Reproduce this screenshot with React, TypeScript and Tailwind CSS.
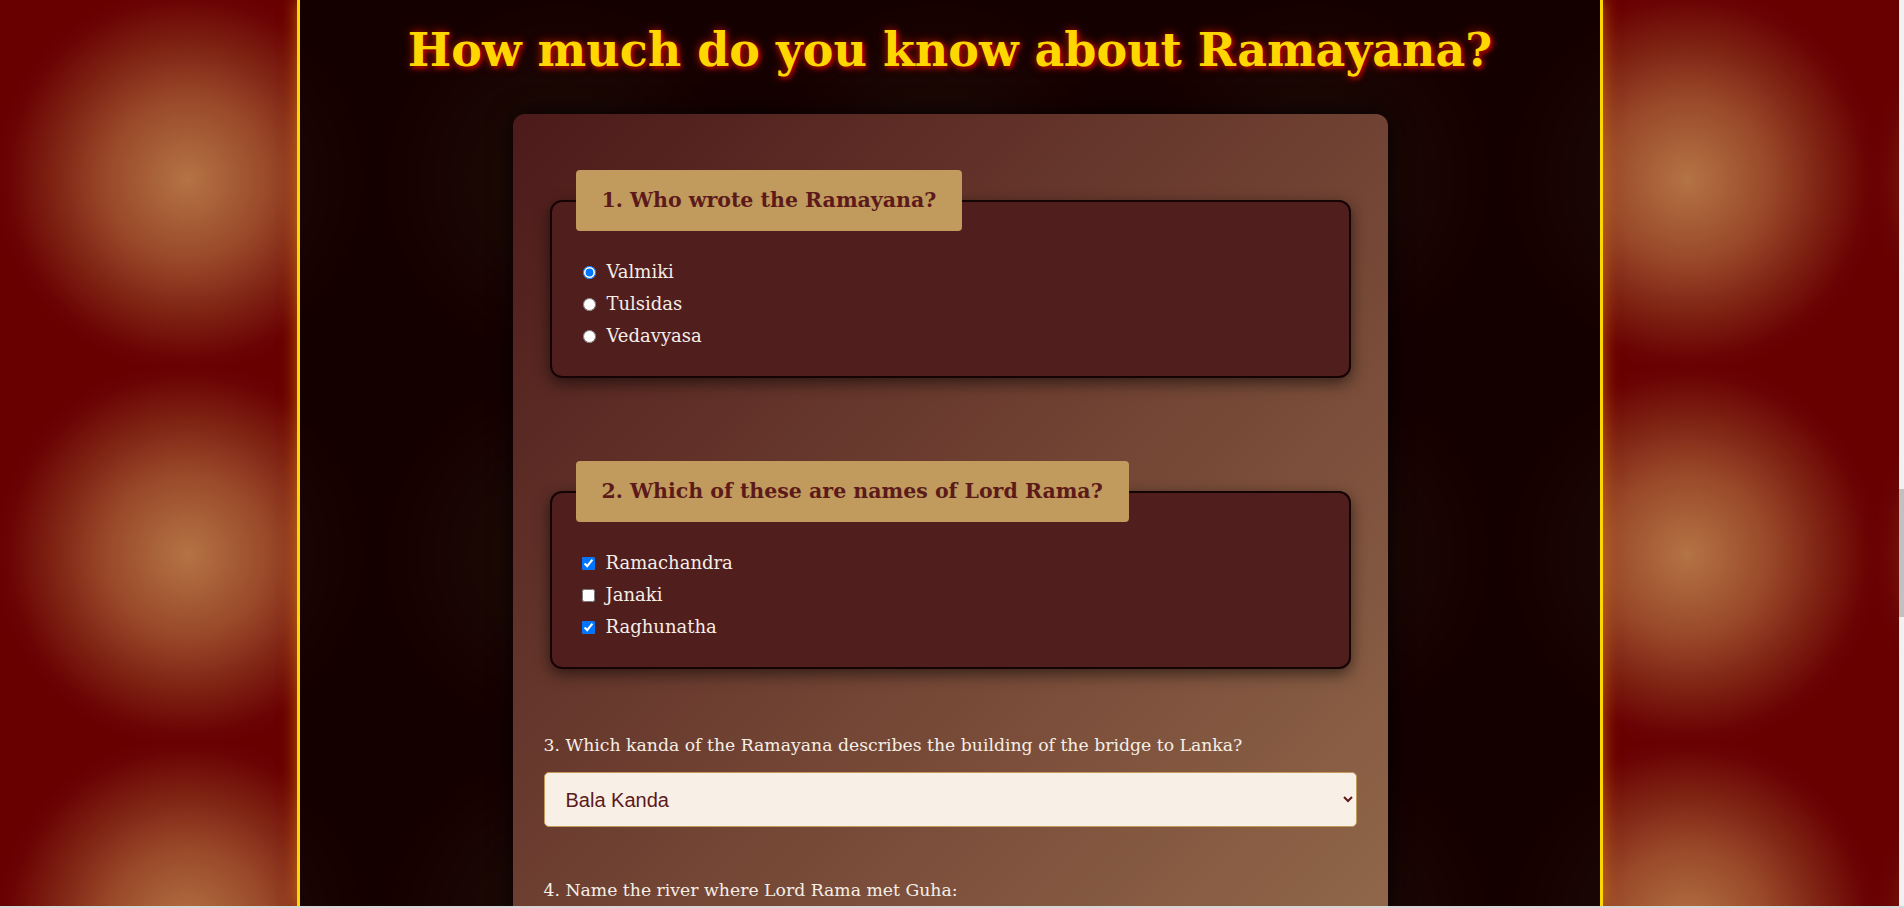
import React from 'react';

const kandas = [
  'Bala Kanda',
  'Ayodhya Kanda',
  'Aranya Kanda',
  'Kishkindha Kanda',
  'Sundara Kanda',
  'Yuddha Kanda',
  'Uttara Kanda'
];

function RadioRow({ name, label, checked }: { name: string; label: string; checked?: boolean }) {
  return (
    <label className="flex h-[32px] items-center">
      <input type="radio" name={name} defaultChecked={checked} className="ml-[7px] h-[13px] w-[13px]" />
      <span className="ml-[11px] text-[18px] leading-[32px] text-[#f5eee6]">{label}</span>
    </label>
  );
}

function CheckRow({ label, checked }: { label: string; checked?: boolean }) {
  return (
    <label className="flex h-[32px] items-center">
      <input type="checkbox" defaultChecked={checked} className="ml-[6px] h-[13px] w-[13px]" />
      <span className="ml-[11px] text-[18px] leading-[32px] text-[#f5eee6]">{label}</span>
    </label>
  );
}

function Legend({ children }: { children: React.ReactNode }) {
  return (
    <legend className="rounded-[4px] bg-[#c19a5d] px-[26px] py-[18px] text-[20.5px] font-bold leading-[25px] text-[#5c1a1a]">
      {children}
    </legend>
  );
}

export default function App() {
  return (
    <div className="flex h-[908px] w-[1904px] flex-col overflow-hidden">
      <div className="flex min-h-0 flex-1">
        <div className="flex min-w-0 flex-1 bg-[#680000] bg-[radial-gradient(circle_at_center,#b47444_0%,#9a4a2a_30%,#7d2012_52%,#6a0303_68%,#680000_73%)] bg-[length:375px_375px] bg-[position:0_-8px]">
          <div className="w-[297px] shrink-0" />

          <main className="flex w-[1306px] shrink-0 flex-col items-center overflow-hidden border-x-[3px] border-[#ffd700] bg-[rgba(12,0,0,0.9)] font-['DejaVu_Serif',serif] shadow-[0_0_15px_rgba(255,150,0,0.6)]">
            <h1 className="pt-[18px] text-center text-[46px] font-bold leading-[64px] text-[#ffd700] [text-shadow:2px_2px_4px_#b00000,0_0_10px_rgba(255,40,0,0.7)]">
              How much do you know about Ramayana?
            </h1>

            <form className="mt-[32px] min-h-[1300px] w-[875px] shrink-0 rounded-[12px] bg-[linear-gradient(135deg,#4c1a1a_0%,#a57e58_100%)] px-[31px] pb-[40px] pt-[31px] shadow-[0_0_25px_rgba(0,0,0,0.8)]">
              <fieldset className="mx-[6px] mt-[25px] rounded-[12px] border-2 border-[#140404] bg-[#511e1e] pb-[24px] pl-[24px] pr-[24px] pt-[25px] shadow-[0_5px_15px_rgba(0,0,0,0.55)]">
                <Legend>1. Who wrote the Ramayana?</Legend>
                <RadioRow name="author" label="Valmiki" checked />
                <RadioRow name="author" label="Tulsidas" />
                <RadioRow name="author" label="Vedavyasa" />
              </fieldset>

              <fieldset className="mx-[6px] mt-[83px] rounded-[12px] border-2 border-[#140404] bg-[#511e1e] pb-[24px] pl-[24px] pr-[24px] pt-[25px] shadow-[0_5px_15px_rgba(0,0,0,0.55)]">
                <Legend>2. Which of these are names of Lord Rama?</Legend>
                <CheckRow label="Ramachandra" checked />
                <CheckRow label="Janaki" />
                <CheckRow label="Raghunatha" checked />
              </fieldset>

              <div className="mt-[64px]">
                <label className="block text-[17.25px] leading-[24px] text-[#f5eee6]">
                  3. Which kanda of the Ramayana describes the building of the bridge to Lanka?
                </label>
                <select
                  defaultValue="Bala Kanda"
                  className="mt-[15px] block h-[55px] w-full rounded-[5px] border border-[#c49a5a] bg-[#f8efe6] pl-[17px] pr-[4px] font-['Liberation_Sans',Arial,sans-serif] text-[20px] text-[#5c1a1a]"
                >
                  {kandas.map((k) => (
                    <option key={k} value={k}>
                      {k}
                    </option>
                  ))}
                </select>
              </div>

              <div className="mt-[51px]">
                <label className="block text-[17.25px] leading-[24px] text-[#f5eee6]">
                  4. Name the river where Lord Rama met Guha:
                </label>
                <input
                  type="text"
                  placeholder="Enter the river name"
                  className="mt-[15px] block h-[55px] w-full rounded-[5px] border border-[#c49a5a] bg-[#f8efe6] px-[21px] font-['Liberation_Sans',Arial,sans-serif] text-[20px] text-[#5c1a1a]"
                />
              </div>

              <div className="mt-[51px]">
                <label className="block text-[17.25px] leading-[24px] text-[#f5eee6]">
                  5. Describe in a few words the role of Hanuman in the Ramayana:
                </label>
                <textarea
                  rows={4}
                  className="mt-[15px] block w-full rounded-[5px] border border-[#c49a5a] bg-[#f8efe6] px-[21px] py-[15px] font-['Liberation_Sans',Arial,sans-serif] text-[20px] text-[#5c1a1a]"
                />
              </div>

              <button
                type="button"
                className="mt-[40px] block w-full rounded-[8px] bg-[#c19a5d] py-[16px] text-[22px] font-bold text-[#5c1a1a]"
              >
                Submit Answers
              </button>
            </form>
          </main>

          <div className="min-w-0 flex-1" />
        </div>

        <div className="flex w-[5px] shrink-0 flex-col bg-[#f1f1f1]">
          <div className="h-[489px]" />
          <div className="h-[128px] bg-[#c1c1c1]" />
        </div>
      </div>
      <div className="h-[2px] bg-[#d6d6d6]" />
    </div>
  );
}
